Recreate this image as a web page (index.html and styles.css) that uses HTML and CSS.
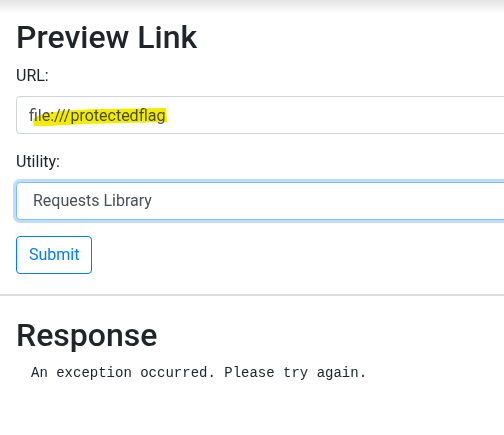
FILE: index.html
```html
<!DOCTYPE html>
<html>
<head>
<meta charset="utf-8">
<link rel="stylesheet" href="styles.css">
</head>
<body>
<div class="topshade"></div>
<main class="container">
  <h1 class="title">Preview Link</h1>
  <form class="form">
    <div class="form-group">
      <label class="label" for="url">URL:</label>
      <div class="field-wrap">
        <input class="form-control" id="url" type="text" value="file:///protectedflag">
        <svg class="marker" width="180" height="30" viewBox="0 0 180 30">
          <path d="M17 23 L22 20 L30 17 L50 14.5 L80 13 L120 12.5 L150 12 L151 26 L110 27 L70 28 L40 29.5 L18 31 Z" fill="#f3ec00"/>
        </svg>
      </div>
    </div>
    <div class="form-group">
      <label class="label" for="util">Utility:</label>
      <select class="form-control select focused" id="util">
        <option>Requests Library</option>
      </select>
    </div>
    <button class="btn" type="button">Submit</button>
  </form>
</main>
<hr class="divider">
<section class="container">
  <h1 class="title">Response</h1>
  <pre class="output">An exception occurred. Please try again.</pre>
</section>
</body>
</html>
```
FILE: styles.css
```css
html, body {
  margin: 0;
  padding: 0;
  background: #fff;
  overflow: hidden;
}
body {
  font-family: Roboto, "Liberation Sans", sans-serif;
  font-size: 16px;
  line-height: 1.5;
  color: #212529;
}
.topshade {
  height: 14px;
  background: linear-gradient(to bottom, #e4e4e4, #ffffff);
  margin-bottom: 4px;
}
.container {
  width: 560px;
  padding-left: 16px;
  box-sizing: border-box;
}
.title {
  font-size: 32px;
  font-weight: 500;
  line-height: 1.2;
  margin: 0 0 8px;
  color: #212529;
}
.form {
  margin: 0;
}
.form-group {
  margin-bottom: 16px;
}
.label {
  display: inline-block;
  margin-bottom: 8px;
}
.field-wrap {
  position: relative;
}
.form-control {
  display: block;
  width: 100%;
  height: 38px;
  box-sizing: border-box;
  padding: 6px 12px;
  font-family: Roboto, "Liberation Sans", sans-serif;
  font-size: 16px;
  line-height: 1.5;
  color: #495057;
  background: #fff;
  border: 1px solid #ced4da;
  border-radius: 4px;
  margin: 0;
}
.marker {
  position: absolute;
  left: 0;
  top: 0;
  mix-blend-mode: multiply;
  pointer-events: none;
}
.select {
  -webkit-appearance: none;
  appearance: none;
  padding-left: 16px;
}
.focused {
  border-color: #80bdff;
  box-shadow: 0 0 0 3px rgba(0, 123, 255, 0.25);
  outline: none;
}
.btn {
  display: inline-block;
  font-family: Roboto, "Liberation Sans", sans-serif;
  font-size: 16px;
  line-height: 1.5;
  padding: 6px 12px;
  color: #007bff;
  background: transparent;
  border: 1px solid #007bff;
  border-radius: 4px;
  margin: 0;
  height: 38px;
}
.divider {
  margin: 20px 0 20px;
  border: 0;
  border-top: 2px solid #dddddd;
}
.output {
  font-family: "Liberation Mono", "DejaVu Sans Mono", monospace;
  font-size: 14px;
  line-height: 1.5;
  margin: 0;
  padding-left: 15px;
  color: #212529;
}
```
